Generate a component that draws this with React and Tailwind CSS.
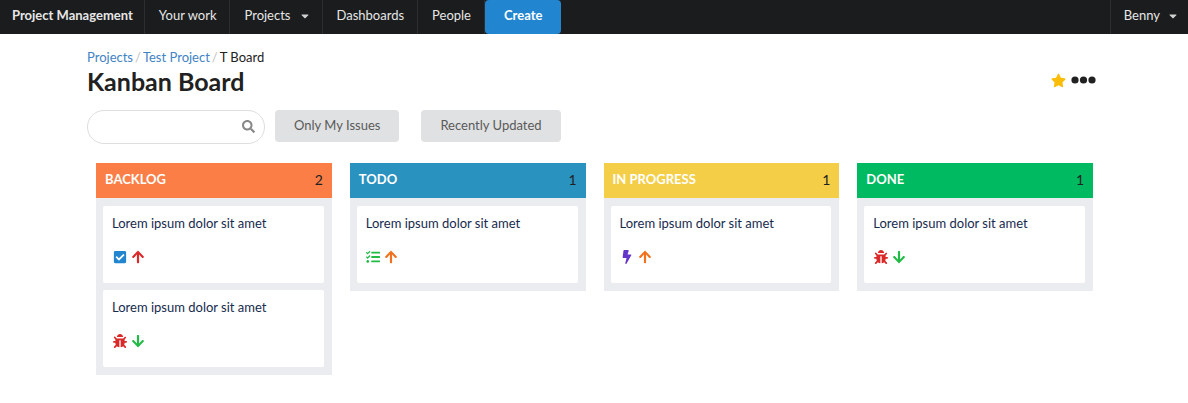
import React from "react";
import {
  FaArrowDown,
  FaArrowUp,
  FaBolt,
  FaBug,
  FaCaretDown,
  FaCheckSquare,
  FaSearch,
  FaStar,
} from "react-icons/fa";

function TasksIcon(props) {
  return (
    <svg viewBox="0 0 512 512" fill="currentColor" {...props}>
      <path d="M208 132h288c8.8 0 16-7.2 16-16V76c0-8.8-7.2-16-16-16H208c-8.8 0-16 7.2-16 16v40c0 8.8 7.2 16 16 16zm0 160h288c8.8 0 16-7.2 16-16v-40c0-8.8-7.2-16-16-16H208c-8.8 0-16 7.2-16 16v40c0 8.8 7.2 16 16 16zm0 160h288c8.8 0 16-7.2 16-16v-40c0-8.8-7.2-16-16-16H208c-8.8 0-16 7.2-16 16v40c0 8.8 7.2 16 16 16zM64 368c-26.5 0-48.6 21.5-48.6 48s22.1 48 48.6 48 48-21.5 48-48-21.5-48-48-48zm92.5-299l-72.2 72.2-15.6 15.6c-4.7 4.7-12.9 4.7-17.6 0L3.5 109.4c-4.7-4.7-4.7-12.3 0-17l15.7-15.7c4.7-4.7 12.3-4.7 17 0l22.7 22.1 63.7-63.3c4.7-4.7 12.3-4.7 17 0l17 16.5c4.6 4.7 4.6 12.3-.1 17zm0 159.6l-72.2 72.2-15.7 15.7c-4.7 4.7-12.9 4.7-17.6 0L3.5 269c-4.7-4.7-4.7-12.3 0-17l15.7-15.7c4.7-4.7 12.3-4.7 17 0l22.7 22.1 63.7-63.7c4.7-4.7 12.3-4.7 17 0l17 17c4.6 4.6 4.6 12.2-.1 16.9z" />
    </svg>
  );
}

const TYPES = {
  task: { Icon: FaCheckSquare, color: "text-[#2185d0]", label: "Task" },
  bug: { Icon: FaBug, color: "text-[#db2828]", label: "Bug" },
  story: { Icon: TasksIcon, color: "text-[#21ba45]", label: "Story" },
  epic: { Icon: FaBolt, color: "text-[#6435c9]", label: "Epic" },
};

const PRIORITIES = {
  highest: { Icon: FaArrowUp, color: "text-[#db2828]", label: "Highest priority" },
  high: { Icon: FaArrowUp, color: "text-[#f2711c]", label: "High priority" },
  low: { Icon: FaArrowDown, color: "text-[#21ba45]", label: "Low priority" },
};

const COLUMNS = [
  {
    title: "BACKLOG",
    header: "bg-[#fc7e47]",
    issues: [
      { type: "task", priority: "highest" },
      { type: "bug", priority: "low" },
    ],
  },
  { title: "TODO", header: "bg-[#2a92bf]", issues: [{ type: "story", priority: "high" }] },
  { title: "IN PROGRESS", header: "bg-[#f4ce46]", issues: [{ type: "epic", priority: "high" }] },
  { title: "DONE", header: "bg-[#00ba61]", issues: [{ type: "bug", priority: "low" }] },
];

function NavItem({ children, className = "pl-[14px] pr-[13px]" }) {
  return (
    <a href="#" className={`flex items-center border-r border-[#2d2e2f] pb-[4px] ${className}`}>
      {children}
    </a>
  );
}

function NavMenu({ children, className }) {
  return (
    <button type="button" className={`flex items-center border-[#2d2e2f] pb-[4px] ${className}`}>
      {children}
      <FaCaretDown className="mt-[2px] size-[12px] text-[#d0d0d0]" aria-hidden="true" />
    </button>
  );
}

function IssueCard({ issue }) {
  const type = TYPES[issue.type];
  const priority = PRIORITIES[issue.priority];
  return (
    <li className="rounded-[2px] bg-white px-[9px] pt-[7px] pb-[19px]">
      <p className="leading-[20px] text-[#172b4d]">Lorem ipsum dolor sit amet</p>
      <div className="mt-[17px] flex h-[14px] items-center gap-[3px]">
        <span className="flex w-[15px] justify-center">
          <type.Icon className={`size-[14px] ${type.color}`} role="img" aria-label={type.label} />
        </span>
        <span className="flex w-[15px] justify-center">
          <priority.Icon className={`size-[14px] ${priority.color}`} role="img" aria-label={priority.label} />
        </span>
      </div>
    </li>
  );
}

function Column({ column }) {
  return (
    <section className="bg-[#ebecf0]">
      <header className={`flex h-[35px] items-center justify-between px-[9px] pb-[2px] ${column.header}`}>
        <h2 className="pb-[2px] font-bold text-white">{column.title}</h2>
        <span className="text-[14px] text-[#212121]">{column.issues.length}</span>
      </header>
      <ul className="flex flex-col gap-[7px] p-[8px] pl-[7px]">
        {column.issues.map((issue, i) => (
          <IssueCard key={i} issue={issue} />
        ))}
      </ul>
    </section>
  );
}

export default function App() {
  return (
    <div className="font-['Lato',sans-serif] text-[13px] leading-[18px] text-[#212121]">
      <nav className="flex h-[34px] bg-[#1b1c1d] text-[#e6e6e6]">
        <NavItem className="pr-[11px] pl-[12px] font-bold">Project Management</NavItem>
        <NavItem>Your work</NavItem>
        <NavMenu className="gap-[8px] border-r pr-[11px] pl-[14px]">Projects</NavMenu>
        <NavItem>Dashboards</NavItem>
        <NavItem>People</NavItem>
        <button type="button" className="rounded-[4px] bg-[#2185d0] px-[19px] pb-[4px] font-bold text-white">
          Create
        </button>
        <NavMenu className="ml-auto gap-[7px] border-l pr-[9px] pl-[13px]">Benny</NavMenu>
      </nav>

      <main className="mx-auto w-full max-w-[1014px] pt-[14px]">
        <nav aria-label="Breadcrumb" className="flex gap-[2px]">
          <a href="#" className="text-[#4183c4]">Projects</a>
          <span className="text-[#bfbfbf]">/</span>
          <a href="#" className="text-[#4183c4]">Test Project</a>
          <span className="text-[#bfbfbf]">/</span>
          <span aria-current="page">T Board</span>
        </nav>

        <div className="flex items-center justify-between pr-[5px]">
          <h1 className="text-[25px] leading-[30px] font-bold">Kanban Board</h1>
          <div className="flex items-center gap-[5px] pb-[2px]">
            <button type="button" aria-label="Favourite">
              <FaStar className="size-[15px] text-[#fbbd08]" />
            </button>
            <button type="button" aria-label="More actions">
              <svg viewBox="0 0 25 8" className="h-[8px] w-[25px]" fill="currentColor">
                <circle cx="4" cy="4" r="3.6" />
                <circle cx="12.5" cy="4" r="3.6" />
                <circle cx="21" cy="4" r="3.6" />
              </svg>
            </button>
          </div>
        </div>

        <div className="mt-[14px] flex items-start">
          <label className="flex h-[34px] w-[178px] items-center rounded-full border border-[#dededf] pr-[9px] pb-[2px] pl-[13px]">
            <input type="text" aria-label="Search issues" className="min-w-0 flex-1 outline-none" />
            <FaSearch className="size-[13px] text-[#888888]" aria-hidden="true" />
          </label>
          <button type="button" className="ml-[10px] h-[32px] rounded-[4px] bg-[#e0e1e2] px-[19px] pb-[2px] text-[#5a5a5a]">
            Only My Issues
          </button>
          <button type="button" className="ml-[22px] h-[32px] rounded-[4px] bg-[#e0e1e2] px-[19px] pb-[2px] text-[#5a5a5a]">
            Recently Updated
          </button>
        </div>

        <div className="mt-[19px] grid grid-cols-4 items-start gap-[18px] pr-[8px] pl-[9px]">
          {COLUMNS.map((column) => (
            <Column key={column.title} column={column} />
          ))}
        </div>
      </main>
    </div>
  );
}
